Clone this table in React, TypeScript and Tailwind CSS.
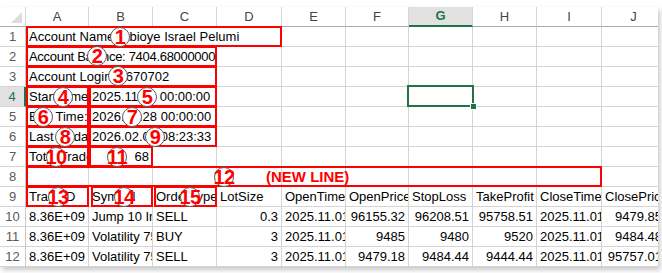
import React from 'react';

type Cell = { t?: string; span?: number; right?: boolean; clip?: boolean; tight?: boolean };

const cols = [63, 64, 64, 65, 64, 63, 64, 64, 65, 64];
const letters = ['A', 'B', 'C', 'D', 'E', 'F', 'G', 'H', 'I', 'J'];

const empty = (n: number): Cell[] => Array.from({ length: n }, () => ({}));

const rows: Cell[][] = [
    [{ t: 'Account Name: Abioye Israel Pelumi', span: 4 }, ...empty(6)],
    [{ t: 'Account Balance: 7404.68000000', span: 3, tight: true }, ...empty(7)],
    [{ t: 'Account Login: 1670702', span: 3 }, ...empty(7)],
    [{ t: 'Start Time:', clip: true }, { t: '2025.11.01 00:00:00', span: 2 }, ...empty(7)],
    [{ t: 'End Time:', clip: true }, { t: '2026.01.28 00:00:00', span: 2 }, ...empty(7)],
    [{ t: 'Last Update:', clip: true }, { t: '2026.02.03 08:23:33', span: 2 }, ...empty(7)],
    [{ t: 'Total Trades:', clip: true }, { t: '68', right: true }, ...empty(8)],
    empty(10),
    ['TradeID', 'Symbol', 'OrderType', 'LotSize', 'OpenTime', 'OpenPrice', 'StopLoss', 'TakeProfit', 'CloseTime', 'ClosePrice'].map(
        (t) => ({ t, clip: true })
    ),
    [
        { t: '8.36E+09', right: true },
        { t: 'Jump 10 Index', clip: true },
        { t: 'SELL', clip: true },
        { t: '0.3', right: true },
        { t: '2025.11.01 00:00:00', clip: true },
        { t: '96155.32', right: true },
        { t: '96208.51', right: true },
        { t: '95758.51', right: true },
        { t: '2025.11.01 00:00:00', clip: true },
        { t: '9479.85', right: true },
    ],
    [
        { t: '8.36E+09', right: true },
        { t: 'Volatility 75 Index', clip: true },
        { t: 'BUY', clip: true },
        { t: '3', right: true },
        { t: '2025.11.01 00:00:00', clip: true },
        { t: '9485', right: true },
        { t: '9480', right: true },
        { t: '9520', right: true },
        { t: '2025.11.01 00:00:00', clip: true },
        { t: '9484.48', right: true },
    ],
    [
        { t: '8.36E+09', right: true },
        { t: 'Volatility 75 Index', clip: true },
        { t: 'SELL', clip: true },
        { t: '3', right: true },
        { t: '2025.11.01 00:00:00', clip: true },
        { t: '9479.18', right: true },
        { t: '9484.44', right: true },
        { t: '9444.44', right: true },
        { t: '2025.11.01 00:00:00', clip: true },
        { t: '95757.01', right: true },
    ],
];

// red annotation boxes: left, top, width, height (page px)
const boxes = [
    [26, 26, 256, 21],
    [26, 46, 191, 21],
    [26, 66, 191, 21],
    [26, 86, 63, 21],
    [89, 86, 128, 21],
    [26, 106, 63, 21],
    [89, 106, 128, 21],
    [26, 126, 63, 21],
    [89, 126, 128, 21],
    [26, 146, 63, 21],
    [89, 146, 64, 21],
    [26, 166, 576, 21],
    [26, 186, 63, 21],
    [91, 186, 62, 21],
    [154, 186, 63, 21],
];

// numbered markers: label, centre x, centre y
const marks: [string, number, number][] = [
    ['1', 120, 37],
    ['2', 97, 56],
    ['3', 118, 76],
    ['4', 63, 97],
    ['5', 147, 97],
    ['6', 43, 117],
    ['7', 132, 117],
    ['8', 65, 137],
    ['9', 155, 137],
    ['10', 56, 157],
    ['11', 117, 157],
    ['12', 224, 177],
    ['13', 58, 197],
    ['14', 124, 197],
    ['15', 190, 197],
];

function Row({ n, cells }: { n: number; cells: Cell[] }) {
    let col = 0;
    const selected = n === 4;
    return (
        <div className="flex h-[20px]">
            <div
                className={
                    selected
                        ? 'w-[26px] shrink-0 flex items-center justify-center border-b border-r-2 border-b-[#d4d4d4] border-r-[#217346] bg-[#e1e1e1] text-[#217346] text-[13px]'
                        : 'w-[26px] shrink-0 flex items-center justify-center border-b border-r border-b-[#d4d4d4] border-r-[#c6c6c6] text-[#5a5a5a] text-[13px]'
                }
            >
                {n}
            </div>
            {cells.map((c, i) => {
                const span = c.span ?? 1;
                const w = cols.slice(col, col + span).reduce((a, b) => a + b, 0);
                col += span;
                return (
                    <div
                        key={i}
                        style={{ width: w }}
                        className={
                            'shrink-0 flex items-center whitespace-nowrap border-r border-b border-[#d4d4d4] text-black text-[13px] ' +
                            (c.right ? 'justify-end pr-[3px] ' : 'pl-[3px] ') +
                            (c.tight ? 'tracking-[-0.3px] ' : '') +
                            (c.clip ? 'overflow-hidden' : 'overflow-visible')
                        }
                    >
                        {c.t}
                    </div>
                );
            })}
        </div>
    );
}

export default function App() {
    return (
        <div className="relative w-[662px] h-[273px] overflow-hidden bg-white font-['Liberation_Sans',Arial,sans-serif]">
            <div className="pt-[7px]">
                <div className="w-[658px] h-[260px] overflow-hidden bg-white shadow-[2px_3px_5px_rgba(0,0,0,0.22)]">
                    {/* column headers */}
                    <div className="flex h-[20px]">
                        <div className="relative w-[26px] shrink-0 border-r border-b border-r-[#d4d4d4] border-b-[#ababab]">
                            <svg className="absolute right-[3px] bottom-[3px]" width="11" height="11" viewBox="0 0 11 11">
                                <polygon points="11,0 11,11 0,11" fill="#dcdcdc" />
                            </svg>
                        </div>
                        {letters.map((l, i) =>
                            l === 'G' ? (
                                <div
                                    key={l}
                                    style={{ width: cols[i] }}
                                    className="shrink-0 flex items-center justify-center bg-[#e1e1e1] border-b-2 border-r border-b-[#217346] border-r-[#d4d4d4] text-[#217346] text-[13px] font-bold"
                                >
                                    {l}
                                </div>
                            ) : (
                                <div
                                    key={l}
                                    style={{ width: cols[i] }}
                                    className="shrink-0 flex items-center justify-center border-b border-r border-b-[#ababab] border-r-[#d4d4d4] text-[#444] text-[13px]"
                                >
                                    {l}
                                </div>
                            )
                        )}
                    </div>
                    {rows.map((cells, i) => (
                        <Row key={i} n={i + 1} cells={cells} />
                    ))}
                </div>
            </div>

            {/* active cell G4 */}
            <div className="absolute left-[407px] top-[85px] w-[67px] h-[22px] border-2 border-[#217346]" />
            <div className="absolute left-[470px] top-[103px] w-[7px] h-[7px] bg-[#217346] border border-white" />

            {/* annotations */}
            {boxes.map(([l, t, w, h], i) => (
                <div
                    key={i}
                    style={{ left: l, top: t, width: w, height: h }}
                    className="absolute border-2 border-[#ff0000]"
                />
            ))}
            <div className="absolute left-[266px] top-[168px] h-[18px] flex items-center text-[15px] font-bold text-[#ff0000]">
                (NEW LINE)
            </div>
            {marks.map(([label, x, y]) => (
                <div
                    key={label}
                    style={{ left: x - 10, top: y - 10 }}
                    className="absolute w-[20px] h-[20px] rounded-full border border-[#5a5a5a] bg-white flex items-center justify-center"
                >
                    <span className="text-[20px] leading-none font-bold text-[#ff0000] tracking-[-0.5px]">{label}</span>
                </div>
            ))}
        </div>
    );
}
